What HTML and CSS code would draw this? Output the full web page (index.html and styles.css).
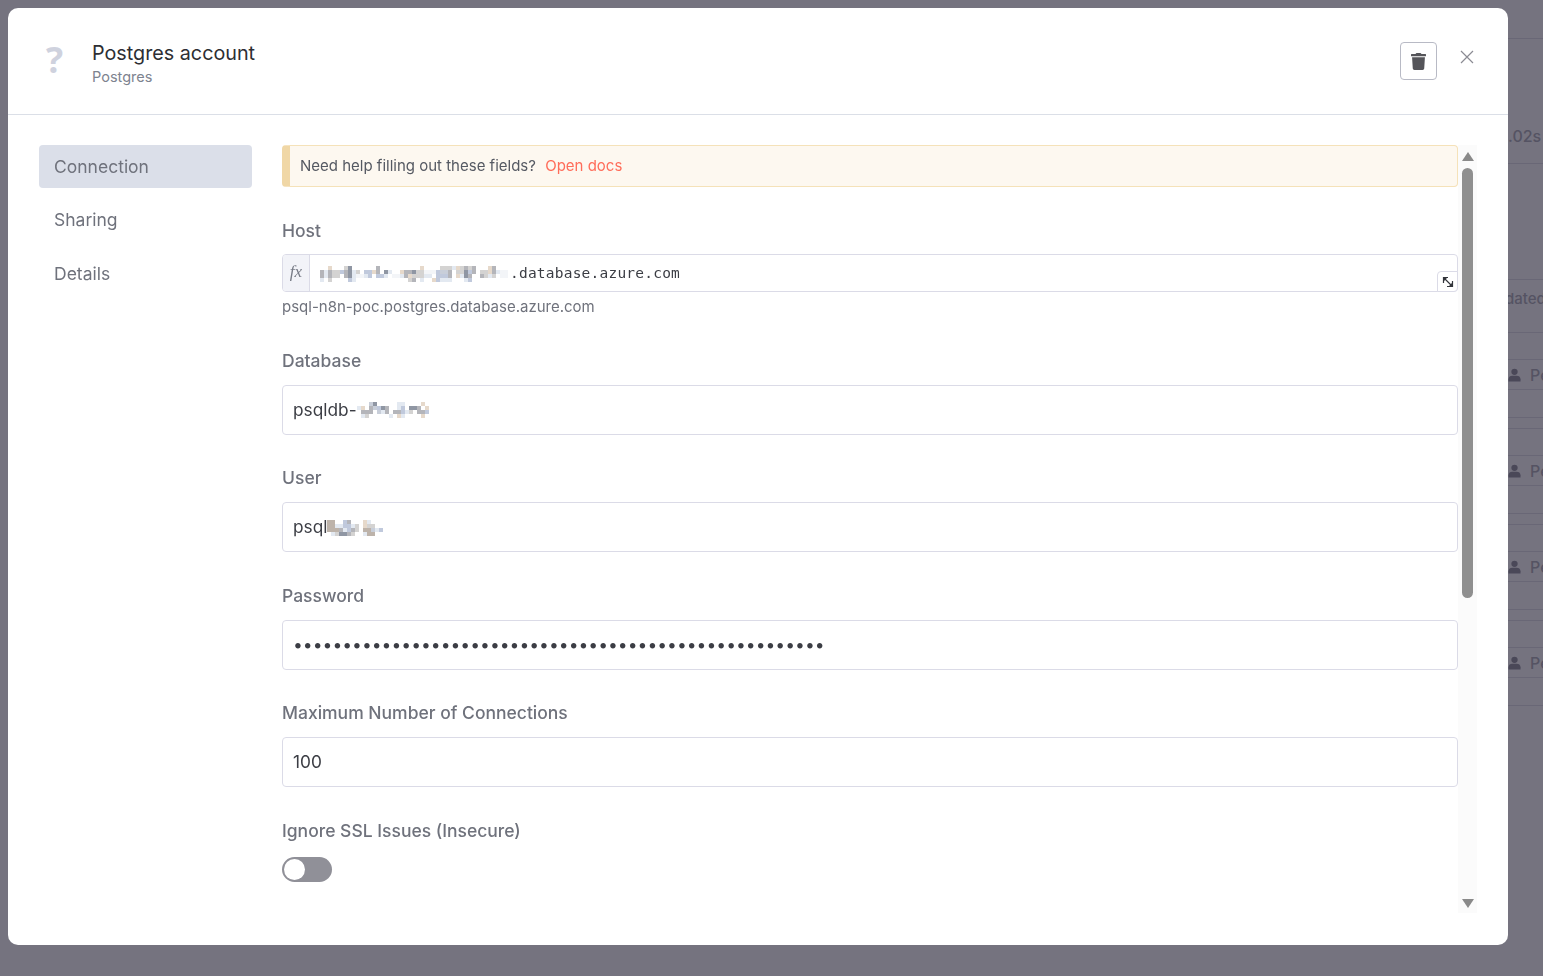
FILE: index.html
```html
<!DOCTYPE html>
<html lang="en">
<head>
<meta charset="utf-8">
<title>Postgres account</title>
<link rel="stylesheet" href="styles.css">
</head>
<body>
<div class="page">
  <div class="bg-col">
    <div class="bg-time">.02s</div>
    <div class="bg-head">dated</div>
    <div class="bg-row"><div class="bg-cell"><svg class="person" viewBox="0 0 14 14"><circle cx="7" cy="3.600" r="3.400"/><path d="M0.500 14v-2.500C0.500 9 2.500 7.800 4.500 7.800h5c2 0 4 1.200 4 3.700V14z"/></svg><span>Pe</span></div></div>
    <div class="bg-spacer"></div>
    <div class="bg-row"><div class="bg-cell"><svg class="person" viewBox="0 0 14 14"><circle cx="7" cy="3.600" r="3.400"/><path d="M0.500 14v-2.500C0.500 9 2.500 7.800 4.500 7.800h5c2 0 4 1.200 4 3.700V14z"/></svg><span>Pe</span></div></div>
    <div class="bg-spacer"></div>
    <div class="bg-row"><div class="bg-cell"><svg class="person" viewBox="0 0 14 14"><circle cx="7" cy="3.600" r="3.400"/><path d="M0.500 14v-2.500C0.500 9 2.500 7.800 4.500 7.800h5c2 0 4 1.200 4 3.700V14z"/></svg><span>Pe</span></div></div>
    <div class="bg-spacer"></div>
    <div class="bg-row"><div class="bg-cell"><svg class="person" viewBox="0 0 14 14"><circle cx="7" cy="3.600" r="3.400"/><path d="M0.500 14v-2.500C0.500 9 2.500 7.800 4.500 7.800h5c2 0 4 1.200 4 3.700V14z"/></svg><span>Pe</span></div></div>
  </div>
</div>
<div class="overlay"></div>
<div class="modal">
  <header class="modal-head">
    <div class="head-left">
      <span class="q-icon">?</span>
      <div class="titles">
        <div class="title">Postgres account</div>
        <div class="subtitle">Postgres</div>
      </div>
    </div>
    <div class="head-right">
      <button class="trash-btn" aria-label="Delete">
        <svg viewBox="0 0 448 512" class="trash" preserveAspectRatio="none"><path d="M432 32H312l-9.400-18.700A24 24 0 0 0 281.100 0H166.800a23.700 23.700 0 0 0-21.400 13.300L136 32H16A16 16 0 0 0 0 48v32a16 16 0 0 0 16 16h416a16 16 0 0 0 16-16V48a16 16 0 0 0-16-16zM53.200 467a48 48 0 0 0 47.900 45h245.800a48 48 0 0 0 47.900-45L416 128H32z"/></svg>
      </button>
      <svg class="close" viewBox="0 0 14 14" aria-label="Close"><path d="M1 1l12 12M13 1L1 13"/></svg>
    </div>
  </header>
  <div class="modal-body">
    <nav class="side">
      <div class="side-item active">Connection</div>
      <div class="side-item">Sharing</div>
      <div class="side-item">Details</div>
    </nav>
    <div class="scroll">
      <main class="content">
        <div class="notice">Need help filling out these fields? <a class="docs">Open docs</a></div>
        <section class="field host-field">
          <label class="label">Host</label>
          <div class="expr">
            <span class="fx">fx</span>
            <div class="expr-input">
              <svg class="px px-host" viewBox="0 0 190 16" shape-rendering="crispEdges">
                <path fill="#f3f5f8" d="M36 8h8v4h-8zM72 8h8v4h-8zM104 4h12v4h-12zM180 4h8v8h-8z"/>
                <path fill="#b4b5ba" d="M0 4h4v8H0zM8 4h4v8H8zM24 4h4v8h-4zM56 0h4v8h-4zM84 4h4v8h-4zM88 4h4v4h-4zM92 12h4v4h-4zM128 4h4v8h-4zM144 0h4v4h-4zM148 8h4v4h-4zM152 0h4v8h-4zM160 8h4v4h-4zM172 0h4v8h-4z"/>
                <path fill="#8f96a3" d="M28 0h4v12h-4zM64 4h4v4h-4zM92 4h4v4h-4zM144 4h4v8h-4z"/>
                <path fill="#c8ced9" d="M120 4h8v4h-8z"/>
                <path fill="#e6d9cb" d="M8 0h4v4H8zM52 4h4v4h-4zM80 4h4v4h-4zM88 8h4v4h-4zM100 0h4v4h-4zM112 12h8v4h-8zM136 0h4v4h-4zM136 8h4v4h-4zM168 0h4v8h-4z"/>
                <path fill="#e3e9f1" d="M0 12h4v4H0zM4 4h4v8H4zM32 4h4v12h-4zM44 8h4v4h-4zM60 8h4v4h-4zM64 8h4v4h-4zM68 4h4v4h-4zM80 8h4v4h-4zM100 12h4v4h-4zM104 8h8v4h-8zM120 12h12v4h-12zM132 0h4v4h-4zM140 8h4v4h-4zM144 12h4v4h-4zM168 8h4v4h-4zM176 4h4v4h-4z"/>
                <path fill="#d4d3d2" d="M8 12h4v4H8zM12 4h8v8h-8zM16 4h4v4h-4zM24 0h4v4h-4zM36 4h4v4h-4zM88 12h4v4h-4zM92 8h4v4h-4zM96 4h4v8h-4zM100 4h4v8h-4zM120 0h8v4h-8zM128 0h4v4h-4zM136 4h8v4h-8zM140 0h4v4h-4zM148 0h4v4h-4zM160 4h8v4h-8zM164 8h4v4h-4zM172 8h4v4h-4z"/>
                <path fill="#c0c9dc" d="M20 4h4v4h-4zM28 12h4v4h-4zM44 4h8v4h-8zM48 8h4v4h-4zM56 8h8v4h-8zM116 4h4v12h-4zM120 8h8v4h-8zM148 4h4v4h-4zM148 12h4v4h-4z"/>
              </svg>
              <span class="expr-text">.database.azure.com</span>
              <button class="expand" aria-label="Expand"><svg viewBox="0 0 12 12"><path class="stroke" d="M1.500 7V1.500H6M10.500 5v5.500H5M3 3l6 6"/><path class="head" d="M1.800 1.800h3.400L1.800 5.200zM10.200 10.200H6.800L10.200 6.800z"/></svg></button>
            </div>
          </div>
          <div class="hint">psql-n8n-poc.postgres.database.azure.com</div>
        </section>
        <section class="field db-field">
          <label class="label">Database</label>
          <div class="input"><span>psqldb-</span><svg class="px px-db" viewBox="0 0 80 16" shape-rendering="crispEdges">
            <path fill="#b4b5ba" d="M8 8h12v4H8zM16 4h4v4h-4zM32 4h4v8h-4zM40 8h8v4h-8zM64 4h4v4h-4zM64 8h8v4h-8z"/>
            <path fill="#8f96a3" d="M20 0h4v4h-4zM28 4h4v4h-4zM56 4h8v4h-8z"/>
            <path fill="#c8ced9" d="M20 4h4v4h-4zM24 8h4v4h-4zM16 0h4v4h-4z"/>
            <path fill="#e6d9cb" d="M8 4h4v4H8zM44 12h4v4h-4zM68 0h4v4h-4zM72 4h4v4h-4zM68 12h4v4h-4z"/>
            <path fill="#e3e9f1" d="M4 4h4v4H4zM8 12h4v4H8zM28 8h4v4h-4zM36 12h4v4h-4zM52 8h4v4h-4zM48 12h4v4h-4zM44 0h8v4h-8zM44 4h4v4h-4z"/>
            <path fill="#c0c9dc" d="M24 4h4v4h-4zM48 4h4v8h-4zM72 8h4v4h-4z"/>
            <path fill="#d4d3d2" d="M12 12h4v4h-4zM56 8h4v4h-4z"/>
          </svg></div>
        </section>
        <section class="field user-field">
          <label class="label">User</label>
          <div class="input"><span>psql</span><svg class="px px-user" viewBox="0 0 56 16" shape-rendering="crispEdges">
            <path fill="#bdb3aa" d="M0 0h8v12H0zM8 8h4v4H8zM36 8h8v4h-8zM40 12h8v4h-8z"/>
            <path fill="#b4b5ba" d="M12 8h4v4h-4zM20 12h4v4h-4zM20 0h4v4h-4zM24 8h4v4h-4z"/>
            <path fill="#8f96a3" d="M12 12h8v4h-8z"/>
            <path fill="#c0c9dc" d="M16 0h4v4h-4zM16 4h8v4h-8zM20 8h4v4h-4zM52 8h4v4h-4z"/>
            <path fill="#c8ced9" d="M44 8h4v4h-4z"/>
            <path fill="#e3e9f1" d="M4 12h4v4H4zM8 4h8v4H8zM16 8h4v4h-4zM24 4h4v4h-4zM36 12h4v4h-4zM48 8h4v4h-4zM40 0h4v4h-4z"/>
            <path fill="#d4d3d2" d="M8 12h4v4H8zM24 12h4v4h-4zM28 4h4v8h-4zM40 4h8v4h-8z"/>
            <path fill="#e6d9cb" d="M36 0h4v8h-4z"/>
          </svg></div>
        </section>
        <section class="field pw-field">
          <label class="label">Password</label>
          <div class="input"><span class="dots">••••••••••••••••••••••••••••••••••••••••••••••••••••••</span></div>
        </section>
        <section class="field max-field">
          <label class="label">Maximum Number of Connections</label>
          <div class="input"><span>100</span></div>
        </section>
        <section class="field ssl-field">
          <label class="label">Ignore SSL Issues (Insecure)</label>
          <div class="switch"><span class="knob"></span></div>
        </section>
      </main>
      <div class="scrollbar">
        <span class="arrow up"></span>
        <div class="track"><div class="thumb"></div></div>
        <span class="arrow down"></span>
      </div>
    </div>
  </div>
</div>
</body>
</html>
```
FILE: styles.css
```css
* { box-sizing: border-box; }
html, body { margin: 0; height: 100%; overflow: hidden; }
body { font-family: Inter, "Liberation Sans", sans-serif; background: #fff; }

.page { width: 1543px; height: 976px; display: flex; justify-content: flex-end; background: #fff; padding-top: 38px; }
.bg-col { width: 35px; flex: none; color: #aeb0b8; font-size: 16px; font-weight: 500; white-space: nowrap; overflow: hidden; }
.bg-time { height: 126px; padding-top: 87px; line-height: 20px; border-top: 1px solid #e2e2e8; border-bottom: 1px solid #e2e2e8; }
.bg-head { height: 54px; margin-top: 115px; padding-top: 9px; font-size: 15px; line-height: 20px; text-indent: -3px; border-top: 1px solid #e2e2e8; border-bottom: 1px solid #e2e2e8; }
.bg-head + .bg-row { margin-top: 26px; }
.bg-row { height: 59px; border-top: 1px solid #e2e2e8; border-bottom: 1px solid #e2e2e8; }
.bg-cell { height: 30px; border-bottom: 1px solid #e2e2e8; display: flex; align-items: center; gap: 9px; line-height: 28px; }
.bg-spacer { height: 27px; margin-top: 10px; border-top: 1px solid #e2e2e8; }
.person { width: 13px; height: 14px; fill: #94949f; flex: none; }

.overlay { position: fixed; inset: 0; background: rgba(25, 22, 41, .6); }

.modal { position: fixed; left: 8px; top: 8px; width: 1500px; height: 937px; background: #fff; border-radius: 10px; display: flex; flex-direction: column; }

.modal-head { height: 107px; flex: none; border-bottom: 1px solid #dbdfe7; display: flex; justify-content: space-between; padding: 0 34px 0 38px; }
.head-left { display: flex; align-items: flex-start; }
.q-icon { width: 46px; margin-top: 30px; font: 700 36px/44px "Open Sans", Inter, sans-serif; color: #cfd2de; }
.titles { padding-top: 32px; }
.title { font-size: 19.750px; line-height: 26px; color: #2d2e33; }
.subtitle { font-size: 14.500px; line-height: 20px; color: #7d838f; margin-top: 1px; }
.head-right { display: flex; align-items: flex-start; gap: 23px; padding-top: 34px; }
.trash-btn { width: 37px; height: 38px; padding: 0; background: #fff; border: 1px solid #b8bac5; border-radius: 4px; display: flex; align-items: center; justify-content: center; }
.trash { width: 15px; height: 17px; fill: #55555a; }
.close { width: 14px; height: 14px; margin-top: 8px; stroke: #8b8b93; stroke-width: 1.200; fill: none; }

.modal-body { flex: 1; min-height: 0; display: flex; padding: 30px 0 0 31px; }
.side { width: 213px; flex: none; margin-right: 30px; }
.side-item { height: 43px; margin-bottom: 10px; padding-left: 15px; border-radius: 4px; font-size: 17.500px; line-height: 44px; color: #6f727c; }
.side-item:nth-child(2) { margin-bottom: 11px; }
.side-item.active { background: #dbdfe9; }

.scroll { flex: 1; min-width: 0; display: flex; height: 768px; }
.content { width: 1176px; flex: none; }

.notice { height: 42px; background: #fdf8f0; border: 1px solid #f5e2b9; border-left: 8px solid #f0d7a6; border-radius: 4px; padding-left: 10px; font-size: 15px; line-height: 40px; color: #555962; }
.docs { color: #ff6d5a; margin-left: 5px; }

.field { display: flex; flex-direction: column; }
.label { font-size: 17.500px; line-height: 22px; font-weight: 500; color: #6f727c; margin-bottom: 13px; }
.host-field { margin-top: 33px; }
.host-field .label { margin-bottom: 12px; }
.db-field { margin-top: 33px; }
.user-field { margin-top: 32px; }
.pw-field { margin-top: 33px; }
.max-field { margin-top: 32px; }
.ssl-field { margin-top: 33px; }
.ssl-field .label { margin-bottom: 15px; }

.expr { height: 38px; display: flex; border: 1px solid #dbdbe7; border-radius: 4px; }
.fx { width: 27px; flex: none; background: #f2f3f8; border-right: 1px solid #dbdbe7; border-radius: 3px 0 0 3px; font: italic 17px/33px "Liberation Serif", serif; color: #777b86; text-align: center; }
.expr-input { flex: 1; position: relative; display: flex; align-items: center; padding-left: 10px; }
.px { flex: none; display: block; }
.px-host { width: 190px; height: 16px; margin-top: 2px; }
.expr-text { font: 14.500px/20px "DejaVu Sans Mono", monospace; color: #3b3d44; letter-spacing: .22px; }
.expand { position: absolute; right: -1px; bottom: -1px; width: 21px; height: 21px; padding: 1px 0 0 0; background: #fff; border: 1px solid #dbdbe7; border-radius: 4px 0 4px 0; display: flex; justify-content: center; align-items: center; }
.expand svg { width: 12px; height: 12px; }
.expand .stroke { fill: none; stroke: #33353b; stroke-width: 1.200; }
.expand .head { fill: #33353b; }
.hint { font-size: 15px; line-height: 20px; color: #6f727c; margin-top: 5px; }

.input { height: 50px; border: 1px solid #dbdbe7; border-radius: 4px; display: flex; align-items: center; padding: 0 0 2px 10px; font-size: 17.300px; color: #3b3d44; }
.px-db { width: 80px; height: 16px; margin: 2px 0 0 -4px; }
.px-user { width: 56px; height: 16px; margin: 4px 0 0 0; }
.dots { font: 17.500px/20px Inter, sans-serif; color: #3b3d44; margin-top: 2px; }

.switch { width: 50px; height: 25px; border-radius: 13px; background: #909098; padding: 2px; }
.knob { display: block; width: 21px; height: 21px; border-radius: 50%; background: #fff; }

.scrollbar { width: 19px; background: #fbfbfb; display: flex; flex-direction: column; align-items: center; }
.track { flex: 1; width: 11px; margin: 7px 0 3px; }
.thumb { height: 430px; width: 11px; background: #8f8f8f; border-radius: 6px; }
.arrow { flex: none; width: 0; height: 0; border-left: 6.500px solid transparent; border-right: 6.500px solid transparent; }
.arrow.up { border-bottom: 9px solid #8a8a8a; margin-top: 7px; }
.arrow.down { border-top: 9px solid #8a8a8a; margin-bottom: 5px; }
```
